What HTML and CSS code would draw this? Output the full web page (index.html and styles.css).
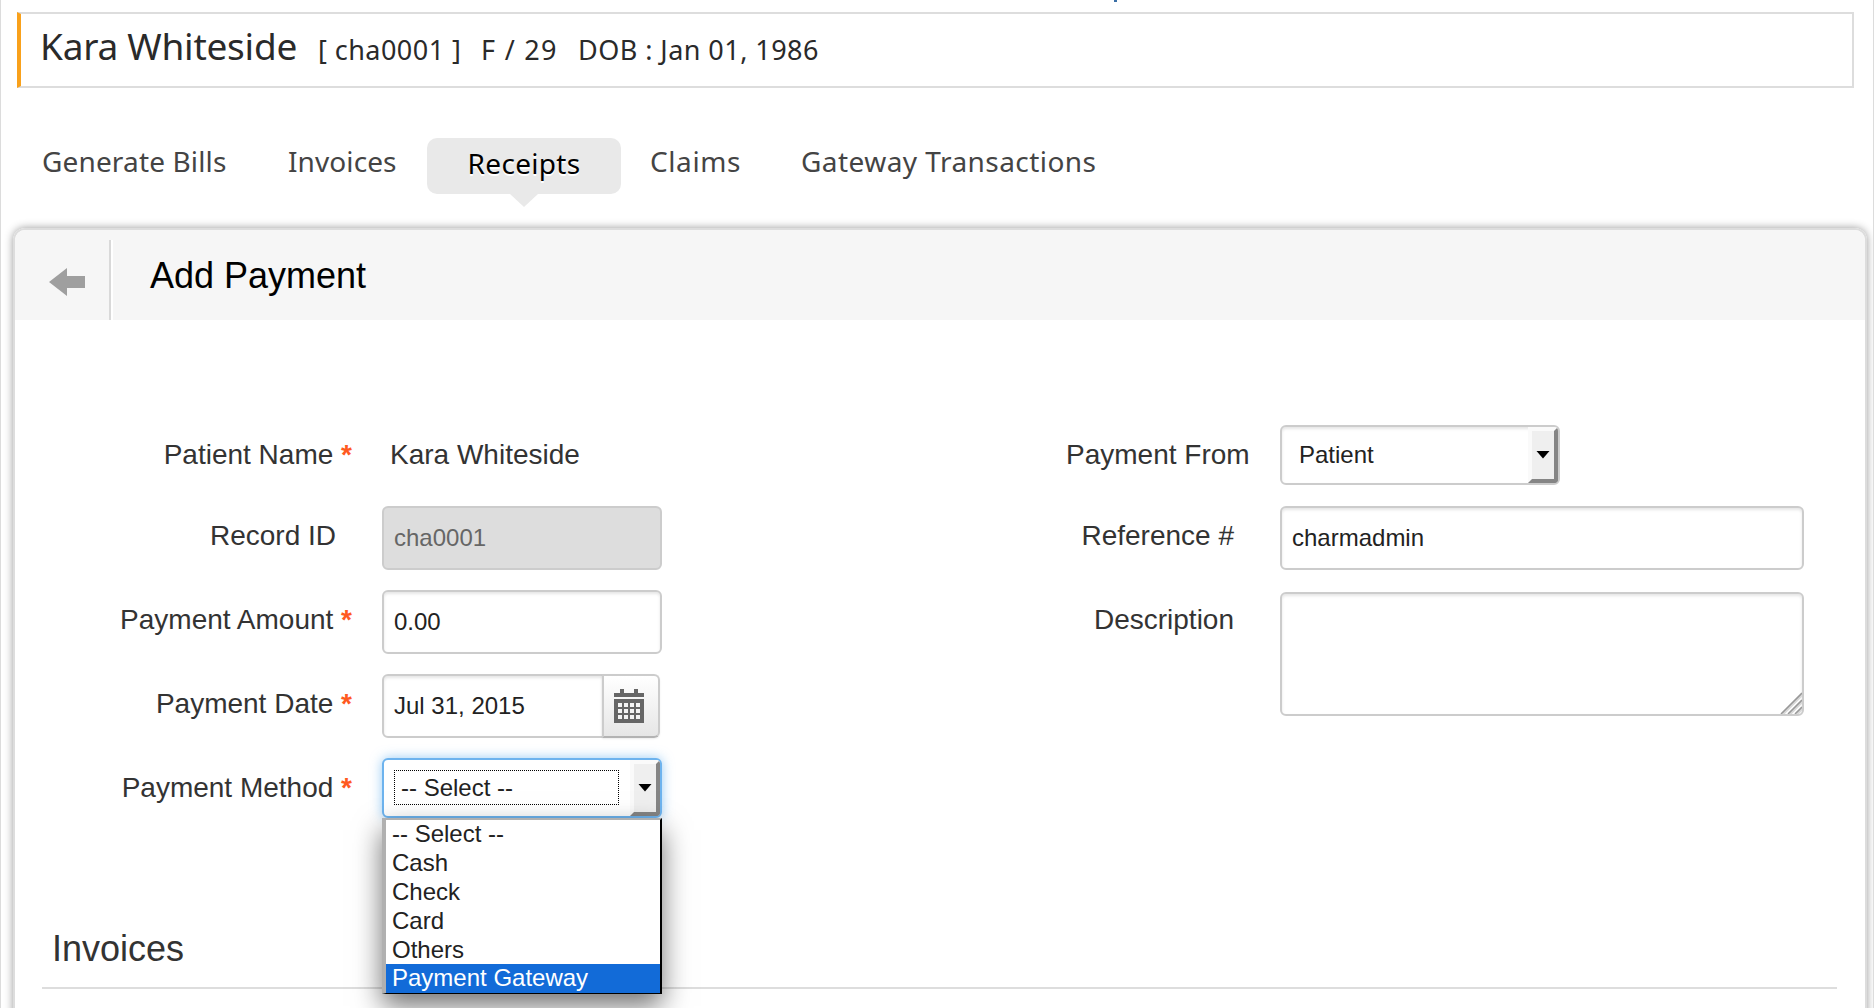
FILE: index.html
```html
<!DOCTYPE html>
<html lang="en">
<head>
<meta charset="utf-8">
<title>Add Payment</title>
<link rel="stylesheet" href="styles.css">
</head>
<body>
<div class="page">
  <span class="top-mark"></span>
  <header class="patient">
    <span class="patient-name">Kara Whiteside</span>
    <span class="patient-id">[ cha0001 ]</span>
    <span class="patient-age">F / 29</span>
    <span class="patient-dob">DOB : Jan 01, 1986</span>
  </header>
  <nav class="tabs">
    <a class="tab tab-bills">Generate Bills</a>
    <a class="tab tab-invoices">Invoices</a>
    <a class="tab tab-active">Receipts</a>
    <a class="tab tab-claims">Claims</a>
    <a class="tab tab-gateway">Gateway Transactions</a>
  </nav>
  <main class="panel">
    <div class="panel-head">
      <a class="back">
        <svg width="36" height="28" viewBox="0 0 36 28"><path d="M0 14 18 0v8h18v12H18v8z" fill="#9f9f9f"/></svg>
      </a>
      <h1 class="title">Add Payment</h1>
    </div>
    <form class="form">
      <div class="column column-left">
        <div class="row row-first">
          <label class="label">Patient Name <b class="req">*</b></label>
          <span class="static">Kara Whiteside</span>
        </div>
        <div class="row">
          <label class="label label-optional">Record ID</label>
          <div class="input input-disabled">cha0001</div>
        </div>
        <div class="row">
          <label class="label">Payment Amount <b class="req">*</b></label>
          <div class="input">0.00</div>
        </div>
        <div class="row">
          <label class="label">Payment Date <b class="req">*</b></label>
          <div class="date">
            <div class="input input-date">Jul 31, 2015</div>
            <div class="date-button">
              <svg width="30" height="34" viewBox="0 0 30 34">
                <path d="M0 4h6V0h4v4h10V0h4v4h6v4H0z" fill="#666"/>
                <path d="M0 10h30v24H0z" fill="#666"/>
                <path d="M4 14h4v4H4zm6 0h4v4h-4zm6 0h4v4h-4zm6 0h4v4h-4zM4 20h4v4H4zm6 0h4v4h-4zm6 0h4v4h-4zm6 0h4v4h-4zM4 26h4v4H4zm6 0h4v4h-4zm6 0h4v4h-4zm6 0h4v4h-4z" fill="#f4f4f4"/>
              </svg>
            </div>
          </div>
        </div>
        <div class="row">
          <label class="label">Payment Method <b class="req">*</b></label>
          <div class="select select-focus">
            <span class="select-text">-- Select --</span>
            <span class="select-arrow"><svg width="14" height="8" viewBox="0 0 14 8"><path d="M.5 0h13L7 7.5z"/></svg></span>
            <ul class="menu">
              <li class="option">-- Select --</li>
              <li class="option">Cash</li>
              <li class="option">Check</li>
              <li class="option">Card</li>
              <li class="option">Others</li>
              <li class="option option-active">Payment Gateway</li>
            </ul>
          </div>
        </div>
      </div>
      <div class="column column-right">
        <div class="row row-first">
          <label class="label">Payment From</label>
          <div class="select">
            <span class="select-text">Patient</span>
            <span class="select-arrow"><svg width="14" height="8" viewBox="0 0 14 8"><path d="M.5 0h13L7 7.5z"/></svg></span>
          </div>
        </div>
        <div class="row">
          <label class="label label-optional">Reference #</label>
          <div class="input">charmadmin</div>
        </div>
        <div class="row">
          <label class="label label-optional">Description</label>
          <div class="input textarea">
            <svg class="grip" width="22" height="22" viewBox="0 0 22 22">
              <path d="M3 22 22 3M10 22l12-12M17 22l5-5" stroke="#d9d9d9" stroke-width="2.5" fill="none"/>
              <path d="M1 22 22 1M8 22 22 8M15 22l7-7" stroke="#999" stroke-width="1.6" fill="none"/>
            </svg>
          </div>
        </div>
      </div>
    </form>
    <h2 class="section">Invoices</h2>
  </main>
</div>
</body>
</html>
```

FILE: styles.css
```css
* { box-sizing: border-box; }

body {
  margin: 0;
  background: #fff;
  color: #333;
  font-family: "Liberation Sans", Arial, sans-serif;
  overflow: hidden;
}

.page {
  position: relative;
  height: 1008px;
  padding-top: 12px;
  border: solid #dcdcdc;
  border-width: 0 1px;
  overflow: hidden;
}

.top-mark {
  position: absolute;
  top: 0;
  left: 1113px;
  width: 3px;
  height: 2px;
  background: #3a6ea5;
}

/* Patient banner */
.patient {
  display: flex;
  align-items: baseline;
  height: 76px;
  margin: 0 19px 0 16px;
  padding-left: 19px;
  border: 2px solid #ddd;
  border-left: 4px solid #f9a11b;
  color: #2a2a2a;
  font: 27px/64px "Noto Sans", sans-serif;
  white-space: nowrap;
}

.patient-name { width: 278px; font-size: 37px; letter-spacing: -.25px; }
.patient-id { width: 163px; letter-spacing: .45px; }
.patient-age { width: 97px; letter-spacing: 1.3px; }
.patient-dob { letter-spacing: .45px; }

/* Tabs */
.tabs {
  display: flex;
  height: 140px;
  padding: 50px 0 0 41px;
  color: #444;
  font: 28px/46px "Noto Sans", sans-serif;
  white-space: nowrap;
}

.tab-bills { width: 246px; letter-spacing: .15px; }
.tab-invoices { width: 139px; letter-spacing: .1px; }
.tab-claims { width: 151px; letter-spacing: .6px; }
.tab-gateway { letter-spacing: .45px; }

.tab-active {
  position: relative;
  width: 194px;
  height: 56px;
  margin-right: 29px;
  border-radius: 10px;
  background: #e9e9e9;
  color: #000;
  letter-spacing: .3px;
  line-height: 50px;
  text-align: center;
  text-shadow: 0 2px 0 #fff;
}

.tab-active::after {
  content: "";
  position: absolute;
  top: 56px;
  left: 83px;
  border: 14px solid transparent;
  border-top: 13px solid #e9e9e9;
  border-bottom: 0;
}

/* Panel */
.panel {
  height: 800px;
  margin: 0 6px 0 12px;
  border: 2px solid #ddd;
  border-radius: 12px;
  box-shadow: 0 0 8px #999;
}

.panel-head {
  display: flex;
  align-items: flex-end;
  height: 90px;
  border-radius: 10px 10px 0 0;
  background: #f6f6f6;
}

.back {
  width: 96px;
  height: 80px;
  padding: 28px 0 0 34px;
  border-right: 2px solid #d9d9d9;
  box-shadow: 2px 0 0 #fff;
}

.back svg { display: block; }

.title {
  margin: 0 0 0 39px;
  color: #000;
  font-size: 36px;
  font-weight: 400;
  line-height: 88px;
}

/* Form */
.form {
  display: flex;
  justify-content: space-between;
  height: 585px;
  padding: 105px 61px 0 0;
}

.row {
  display: flex;
  height: 84px;
}

.row-first { height: 81px; }

.label {
  flex: none;
  width: 367px;
  padding: 0 30px 0 0;
  font-size: 28px;
  line-height: 60px;
  text-align: right;
  white-space: nowrap;
}

.label-optional { padding-right: 46px; }
.req { color: #ff5a1f; font-weight: 700; }

.static {
  padding-left: 8px;
  font-size: 28px;
  line-height: 60px;
}

.input {
  width: 280px;
  height: 64px;
  padding-left: 10px;
  border: 2px solid #ccc;
  border-radius: 6px;
  background: #fff;
  box-shadow: inset 0 2px 3px rgba(0, 0, 0, .1);
  color: #222;
  font-size: 24px;
  line-height: 59px;
}

.input-disabled { background: #ddd; box-shadow: none; color: #666; }

.date { display: flex; }
.input-date { width: 222px; border-radius: 6px 0 0 6px; }

.date-button {
  width: 58px;
  height: 64px;
  margin-left: -2px;
  padding: 13px 0 0 10px;
  border: 2px solid #ccc;
  border-bottom-color: #b3b3b3;
  border-radius: 0 6px 6px 0;
  background: linear-gradient(#fff, #e6e6e6);
  box-shadow: 0 1px 2px rgba(0, 0, 0, .08);
}

.select {
  position: relative;
  display: flex;
  justify-content: space-between;
  width: 280px;
  height: 60px;
  border: 2px solid #ccc;
  border-radius: 6px;
  background: #fff;
  box-shadow: inset 0 2px 3px rgba(0, 0, 0, .1);
  color: #222;
  font-size: 24px;
}

.select-text {
  width: 225px;
  height: 35px;
  margin: 10px 0 0 10px;
  padding-left: 6px;
  border: 1px solid transparent;
  line-height: 33px;
}

.select-arrow {
  width: 30px;
  height: 56px;
  padding: 20px 0 0 4px;
  border: 4px solid #fafafa;
  border-right-color: #858585;
  border-bottom-color: #858585;
  border-radius: 0 4px 4px 0;
  background: #efefef;
}

.select-arrow svg { display: block; }

.select-focus {
  border-color: #6db3ee;
  box-shadow: 0 0 12px rgba(82, 168, 236, .6);
}

.select-focus .select-text { border: 1px dotted #000; }

.menu {
  position: absolute;
  top: 58px;
  left: -2px;
  width: 280px;
  height: 176px;
  margin: 0;
  padding: 0;
  border: solid #b0b0b0;
  border-width: 2px 2px 1px 4px;
  border-right-color: #000;
  border-bottom-color: #000;
  background: #fff;
  box-shadow: 0 12px 26px rgba(0, 0, 0, .55);
  list-style: none;
}

.option {
  height: 29px;
  padding-left: 6px;
  color: #222;
  font-size: 24px;
  line-height: 27px;
}

.option-active {
  margin-top: -1px;
  background: #126bd8;
  color: #fff;
}

.column-right { width: 738px; }
.column-right .label { width: 214px; padding-right: 31px; }
.column-right .label-optional { padding-right: 46px; }
.column-right .input { width: 524px; }

.column-right .textarea {
  position: relative;
  height: 124px;
  margin-top: 2px;
}

.grip {
  position: absolute;
  right: 0;
  bottom: 0;
}

.section {
  height: 84px;
  margin: 0 28px 0 27px;
  padding: 24px 0 0 10px;
  border-bottom: 2px solid #ddd;
  font-size: 36px;
  font-weight: 400;
  line-height: 40px;
}
```
